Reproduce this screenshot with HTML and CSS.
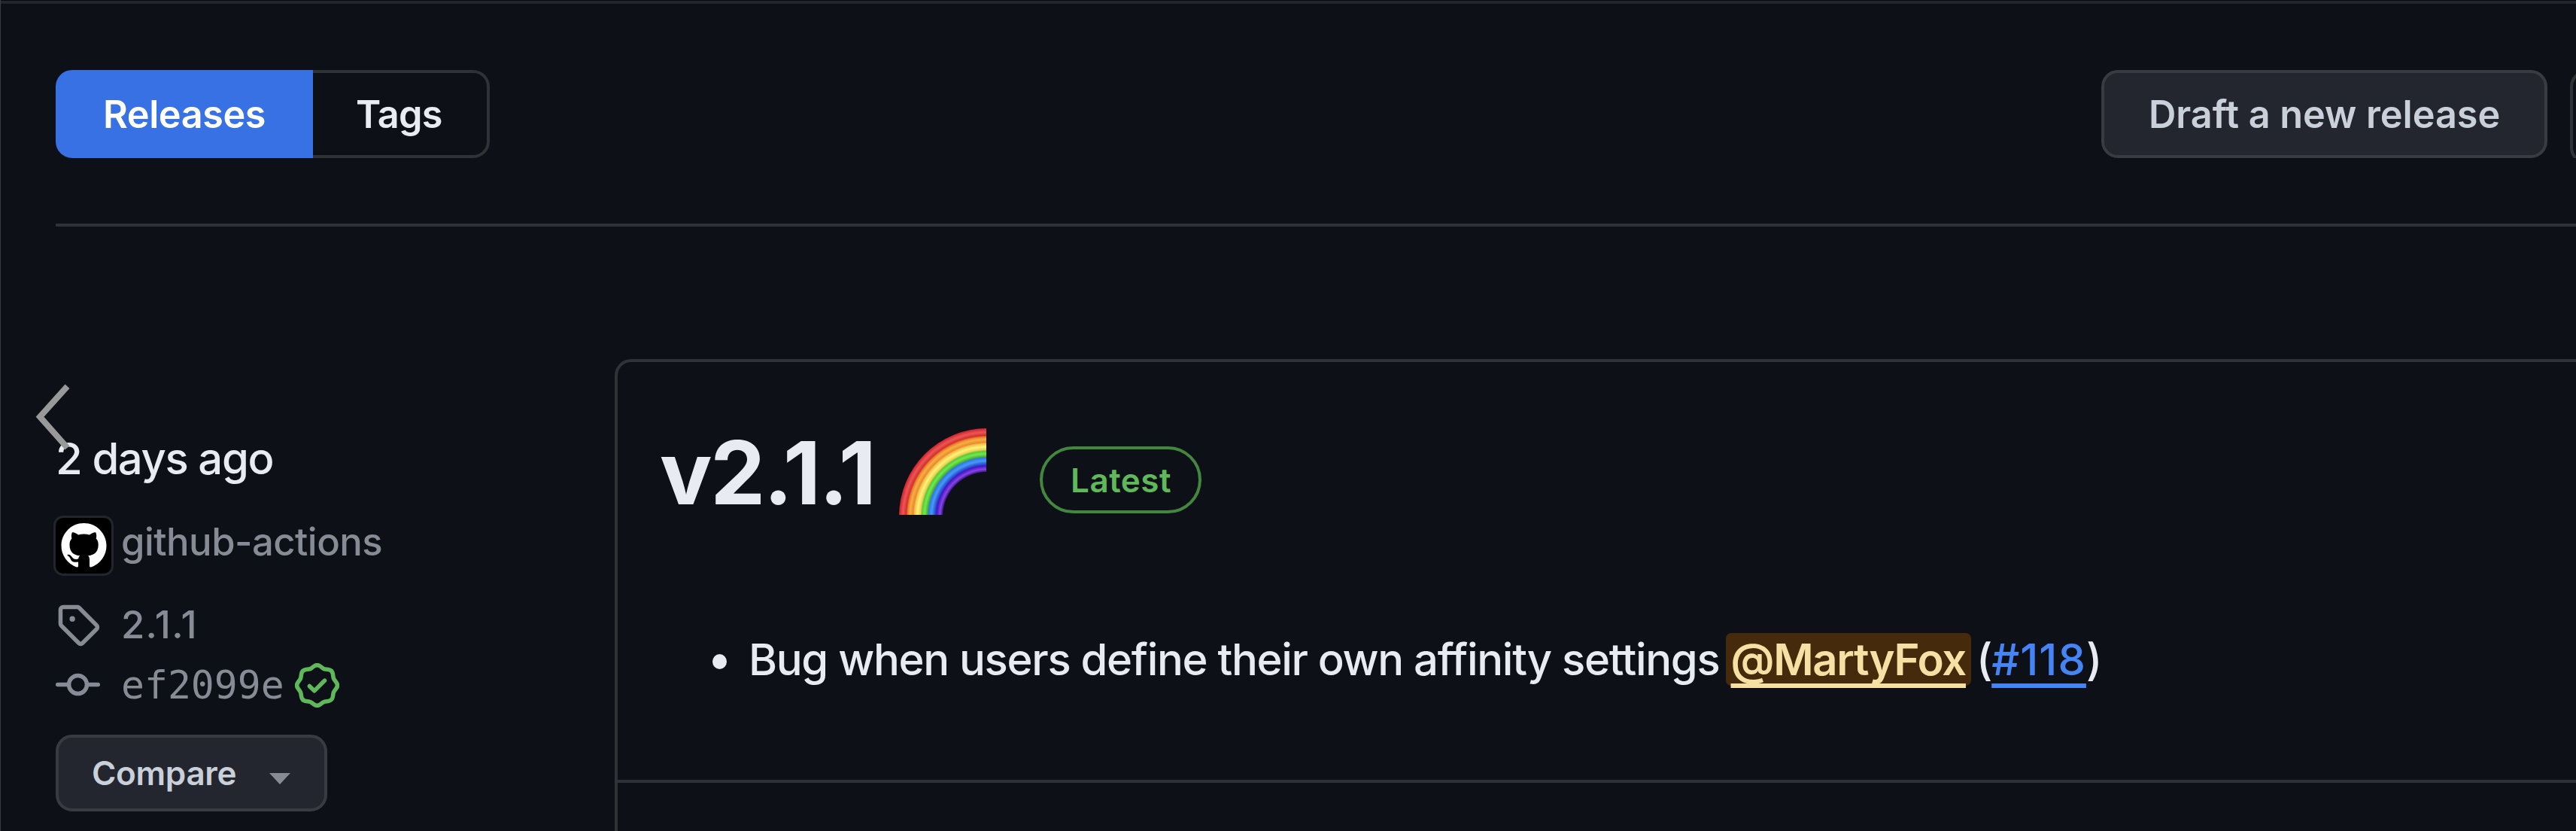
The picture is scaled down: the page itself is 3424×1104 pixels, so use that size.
FILE: index.html
```html
<!DOCTYPE html>
<html lang="en">
<head>
<meta charset="utf-8">
<title>Releases</title>
<link rel="stylesheet" href="styles.css">
</head>
<body>
<main class="page">
  <header class="toolbar">
    <nav class="subnav">
      <a class="subnav-item selected">Releases</a>
      <a class="subnav-item tags">Tags</a>
    </nav>
    <div class="actions">
      <button class="btn draft">Draft a new release</button>
      <span class="search"></span>
    </div>
  </header>

  <section class="release">
    <aside class="meta">
      <svg class="chevron" viewBox="0 0 46 86" aria-hidden="true"><path d="M43.500 2.200 7 42.700 43.500 83.800"/></svg>
      <div class="date">2 days ago</div>
      <div class="author">
        <span class="avatar">
          <svg viewBox="0 0 16 16"><path d="M8 0c4.420 0 8 3.580 8 8a8.013 8.013 0 0 1-5.450 7.590c-.4.08-.55-.17-.55-.38 0-.27.01-1.130.01-2.200 0-.75-.25-1.230-.54-1.480 1.780-.2 3.650-.88 3.650-3.950 0-.88-.31-1.590-.82-2.150.08-.2.36-1.020-.08-2.120 0 0-.67-.22-2.200.82-.64-.18-1.320-.27-2-.27-.68 0-1.360.09-2 .27-1.530-1.030-2.200-.82-2.200-.82-.44 1.100-.16 1.920-.08 2.120-.51.56-.82 1.280-.82 2.150 0 3.060 1.860 3.750 3.640 3.950-.23.2-.44.55-.51 1.070-.46.21-1.610.55-2.330-.66-.15-.24-.6-.83-1.230-.82-.67.01-.27.38.01.53.34.19.73.9.82 1.130.16.45.68 1.310 2.690.94 0 .67.01 1.300.01 1.490 0 .21-.15.45-.55.38A7.995 7.995 0 0 1 0 8c0-4.420 3.580-8 8-8Z"/></svg>
        </span>
        <span class="author-name">github-actions</span>
      </div>
      <div class="row tag">
        <svg class="icon" viewBox="0 0 16 16"><path d="M1 7.775V2.750C1 1.784 1.784 1 2.750 1h5.025c.464 0 .91.184 1.238.513l6.250 6.250a1.750 1.750 0 0 1 0 2.474l-5.026 5.026a1.750 1.750 0 0 1-2.474 0l-6.250-6.250A1.752 1.752 0 0 1 1 7.775Zm1.500 0c0 .066.026.13.073.177l6.250 6.250a.25.25 0 0 0 .354 0l5.025-5.025a.25.25 0 0 0 0-.354l-6.250-6.250a.25.25 0 0 0-.177-.073H2.750a.25.25 0 0 0-.25.25ZM6 5a1 1 0 1 1 0 2 1 1 0 0 1 0-2Z"/></svg>
        <span class="tag-name">2.1.1</span>
      </div>
      <div class="row commit">
        <svg class="icon" viewBox="0 0 16 16"><path d="M11.930 8.500a4.002 4.002 0 0 1-7.860 0H.75a.75.75 0 0 1 0-1.500h3.320a4.002 4.002 0 0 1 7.860 0h3.320a.75.75 0 0 1 0 1.500Zm-1.430-.75a2.500 2.500 0 1 0-5 0 2.500 2.500 0 0 0 5 0Z"/></svg>
        <code class="sha">ef2099e</code>
        <svg class="icon verified" viewBox="0 0 16 16"><path d="m9.585.52.929.68c.153.112.331.186.518.215l1.138.175a2.678 2.678 0 0 1 2.240 2.240l.174 1.139c.029.187.103.365.215.518l.68.928a2.677 2.677 0 0 1 0 3.170l-.68.928a1.174 1.174 0 0 0-.215.518l-.175 1.138a2.678 2.678 0 0 1-2.241 2.241l-1.138.175a1.170 1.170 0 0 0-.518.215l-.928.68a2.677 2.677 0 0 1-3.170 0l-.928-.68a1.174 1.174 0 0 0-.518-.215L3.830 14.410a2.678 2.678 0 0 1-2.240-2.240l-.175-1.138a1.170 1.170 0 0 0-.215-.518l-.68-.928a2.677 2.677 0 0 1 0-3.170l.68-.928c.112-.153.186-.331.215-.518l.175-1.140a2.678 2.678 0 0 1 2.240-2.240l1.139-.175c.187-.029.365-.103.518-.215l.928-.68a2.677 2.677 0 0 1 3.170 0ZM7.303 1.728l-.927.68a2.670 2.670 0 0 1-1.180.489l-1.137.174a1.179 1.179 0 0 0-.987.987l-.174 1.136a2.677 2.677 0 0 1-.489 1.180l-.68.928a1.180 1.180 0 0 0 0 1.394l.68.927c.256.348.424.753.489 1.180l.174 1.137c.078.509.478.909.987.987l1.136.174a2.670 2.670 0 0 1 1.180.489l.928.68c.414.305.979.305 1.394 0l.927-.68a2.670 2.670 0 0 1 1.180-.489l1.137-.174a1.180 1.180 0 0 0 .987-.987l.174-1.136a2.670 2.670 0 0 1 .489-1.180l.68-.928a1.176 1.176 0 0 0 0-1.394l-.68-.927a2.686 2.686 0 0 1-.489-1.180l-.174-1.137a1.179 1.179 0 0 0-.987-.987l-1.136-.174a2.677 2.677 0 0 1-1.180-.489l-.928-.68a1.176 1.176 0 0 0-1.394 0ZM11.280 6.780l-3.750 3.750a.75.75 0 0 1-1.060 0L4.720 8.780a.751.751 0 0 1 .018-1.042.751.751 0 0 1 1.042-.018L7 8.940l3.220-3.220a.751.751 0 0 1 1.042.018.751.751 0 0 1 .018 1.042Z"/></svg>
      </div>
      <button class="btn compare"><span>Compare</span><i class="caret"></i></button>
    </aside>

    <article class="card">
      <div class="card-body">
        <div class="title-row">
          <h1 class="title">v2.1.1</h1>
          <svg class="rainbow" viewBox="0 0 116 115" role="img" aria-label="rainbow">
            <defs>
              <radialGradient id="bands" gradientUnits="userSpaceOnUse" cx="117" cy="117" r="117">
                <stop offset=".503" stop-color="#35107f"/>
                <stop offset=".535" stop-color="#8546e6"/>
                <stop offset=".575" stop-color="#4a14c4"/>
                <stop offset=".59" stop-color="#1f4fcf"/>
                <stop offset=".63" stop-color="#4b97f8"/>
                <stop offset=".665" stop-color="#2f7be0"/>
                <stop offset=".68" stop-color="#4bb534"/>
                <stop offset=".71" stop-color="#70ea4c"/>
                <stop offset=".74" stop-color="#5cc93c"/>
                <stop offset=".757" stop-color="#ecd04c"/>
                <stop offset=".79" stop-color="#fdf27c"/>
                <stop offset=".825" stop-color="#f3c148"/>
                <stop offset=".84" stop-color="#e98a32"/>
                <stop offset=".875" stop-color="#f6b040"/>
                <stop offset=".902" stop-color="#e97e30"/>
                <stop offset=".918" stop-color="#d4302c"/>
                <stop offset=".955" stop-color="#ec5656"/>
                <stop offset="1" stop-color="#cc2229"/>
              </radialGradient>
            </defs>
            <path fill="url(#bands)" fill-rule="evenodd" d="M0 117a117 117 0 1 1 234 0a117 117 0 1 1-234 0ZM58 117a59 59 0 1 0 118 0a59 59 0 1 0-118 0Z"/>
          </svg>
          <span class="label">Latest</span>
        </div>
        <ul class="notes">
          <li>Bug when users define their own affinity settings <a class="mention">@MartyFox</a> (<a class="issue">#118</a>)</li>
        </ul>
      </div>
      <div class="card-footer"></div>
    </article>
  </section>
</main>
</body>
</html>
```
FILE: styles.css
```css
* { box-sizing: border-box; }

body {
  margin: 0;
  background: #0d1117;
  color: #e8ebf2;
  font-family: Inter, "Liberation Sans", sans-serif;
  font-weight: 450;
}

.page {
  width: 3424px;
  height: 1104px;
  overflow: hidden;
  padding-left: 73px;
  border-left: 1px solid #3a3c40;
  background: linear-gradient(#06080b 0 1px, #22252d 1px 5px, transparent 5px);
}

.toolbar {
  display: flex;
  justify-content: space-between;
  height: 301px;
  padding-top: 93px;
  border-bottom: 4px solid #2f3237;
}

.subnav { display: flex; height: 117px; }

.subnav-item {
  font-size: 50.4px;
  font-weight: 600;
  line-height: 109px;
  border: 4px solid #2f3237;
}

.selected {
  width: 342px;
  padding-left: 59px;
  letter-spacing: -.45px;
  color: #fff;
  background: #3871e3;
  border-color: #3871e3;
  border-radius: 22px 0 0 22px;
}

.tags {
  width: 235px;
  padding-left: 57px;
  letter-spacing: -.8px;
  border-left: 0;
  border-radius: 0 22px 22px 0;
}

.actions { display: flex; gap: 30px; }

.btn {
  display: flex;
  align-items: center;
  padding: 0;
  font-family: inherit;
  font-weight: 600;
  color: #c9d0d9;
  background: #23262e;
  border: 4px solid #383b41;
  border-radius: 22px;
}

.draft {
  width: 593px;
  height: 117px;
  padding-left: 59px;
  font-size: 50.4px;
  letter-spacing: -.05px;
  white-space: nowrap;
}

.search {
  width: 8px;
  height: 117px;
  overflow: hidden;
}

.search::before {
  content: "";
  display: block;
  width: 120px;
  height: 117px;
  border: 4px solid #2f3237;
  border-radius: 22px;
}

.release { display: flex; }

.meta {
  position: relative;
  flex: none;
  width: 743px;
  padding-top: 278px;
}

.chevron {
  position: absolute;
  left: -28px;
  top: 210px;
  width: 46px;
  height: 86px;
  z-index: 1;
  overflow: visible;
  fill: none;
  stroke: #999;
  stroke-width: 8px;
}

.date {
  height: 61px;
  font-size: 58px;
  line-height: 61px;
  letter-spacing: -1.4px;
}

.author {
  display: flex;
  align-items: center;
  gap: 10px;
  height: 80px;
  margin: 45px 0 0 -3px;
  color: #868b95;
}

.avatar {
  display: flex;
  align-items: center;
  justify-content: center;
  width: 80px;
  height: 80px;
  border: 3px solid #22252c;
  border-radius: 13px;
  background: #000;
}

.avatar svg { width: 61px; height: 60px; fill: #fff; }

.author-name {
  padding-bottom: 10px;
  font-size: 50.8px;
  line-height: 60px;
  letter-spacing: -.52px;
}

.row {
  display: flex;
  align-items: center;
  height: 59px;
  font-size: 50.8px;
  line-height: 59px;
  color: #868b95;
  fill: #868b95;
}

.icon { flex: none; width: 59px; height: 59px; }

.tag { margin-top: 35px; }
.commit { margin-top: 22px; }

.tag-name { margin-left: 28px; letter-spacing: 1.3px; }

.sha {
  width: 231px;
  margin-left: 28px;
  font-family: "DejaVu Sans Mono", "Liberation Mono", monospace;
  font-size: 51.4px;
}

.verified { fill: #5fb85a; }

.compare {
  justify-content: space-between;
  width: 361px;
  height: 102px;
  margin-top: 36px;
  padding: 0 45px 0 44px;
  font-size: 44px;
  letter-spacing: -.33px;
}

.caret {
  margin-top: 14px;
  border: 14px solid transparent;
  border-top: 15px solid #868b95;
  border-bottom: 0;
}

.card {
  flex: none;
  width: 2700px;
  height: 700px;
  margin-top: 176px;
  border: 4px solid #2f3237;
  border-radius: 22px;
}

.card-body { height: 555px; padding: 87px 0 0 56px; }

.card-footer { border-top: 4px solid #2f3237; }

.title-row { display: flex; height: 120px; }

.title {
  width: 318px;
  margin: 0;
  font-size: 116px;
  line-height: 120px;
  font-weight: 670;
  letter-spacing: -2.3px;
}

.rainbow { width: 116px; height: 115px; margin-top: 1px; }

.label {
  width: 215px;
  height: 89px;
  margin: 25px 0 0 71px;
  padding-left: 37px;
  font-size: 44px;
  font-weight: 560;
  line-height: 82px;
  letter-spacing: .5px;
  color: #5fb85a;
  border: 4px solid #43873f;
  border-radius: 45px;
}

.notes {
  margin: 144px 0 0;
  padding: 0;
  list-style: none;
  font-size: 58px;
  line-height: 88px;
  letter-spacing: -1.31px;
  white-space: nowrap;
}

.notes li { display: flow-root; }

.notes li::before {
  content: "";
  float: left;
  width: 19px;
  height: 20px;
  margin: 37px 29px 0 70px;
  border-radius: 50%;
  background: #e8ebf2;
}

.mention, .issue {
  text-decoration: underline;
  text-decoration-thickness: 6px;
  text-decoration-skip-ink: none;
  text-underline-offset: 11px;
}

.mention {
  margin: 0 -7px 0 -6px;
  padding: 0 7px;
  font-weight: 600;
  letter-spacing: -1.3px;
  color: #f7e0a4;
  background: #452a0c;
  border-radius: 7px;
}

.issue { color: #4484f4; letter-spacing: 1px; }
```
